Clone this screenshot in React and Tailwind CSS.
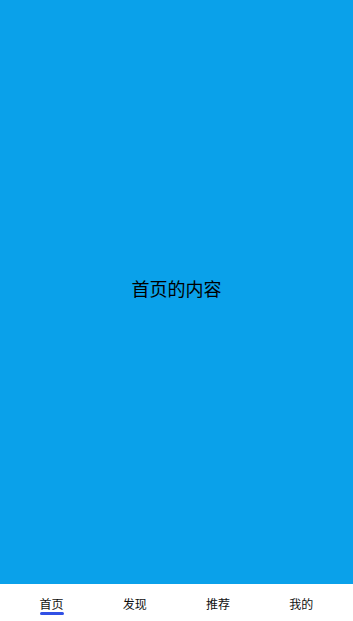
const tabs = ["首页", "发现", "推荐", "我的"];

export default function App() {
  return (
    <div
      className="flex h-[621px] w-full flex-col bg-white"
      style={{ fontFamily: '"Noto Sans CJK SC", "Noto Sans", sans-serif' }}
    >
      <main className="flex flex-1 items-center justify-center bg-[#0aa1ea] pb-[8px]">
        <span className="text-[18px] text-black">首页的内容</span>
      </main>
      <nav className="flex h-[37px] px-[10px]">
        {tabs.map((t, i) => (
          <div key={t} className="flex flex-1 flex-col items-center pt-[14px]">
            <span className="text-[12px] leading-[12px] text-[#111]">{t}</span>
            {i === 0 && <div className="mt-[2px] h-[3px] w-[24px] rounded-sm bg-[#3150e5]" />}
          </div>
        ))}
      </nav>
    </div>
  );
}
